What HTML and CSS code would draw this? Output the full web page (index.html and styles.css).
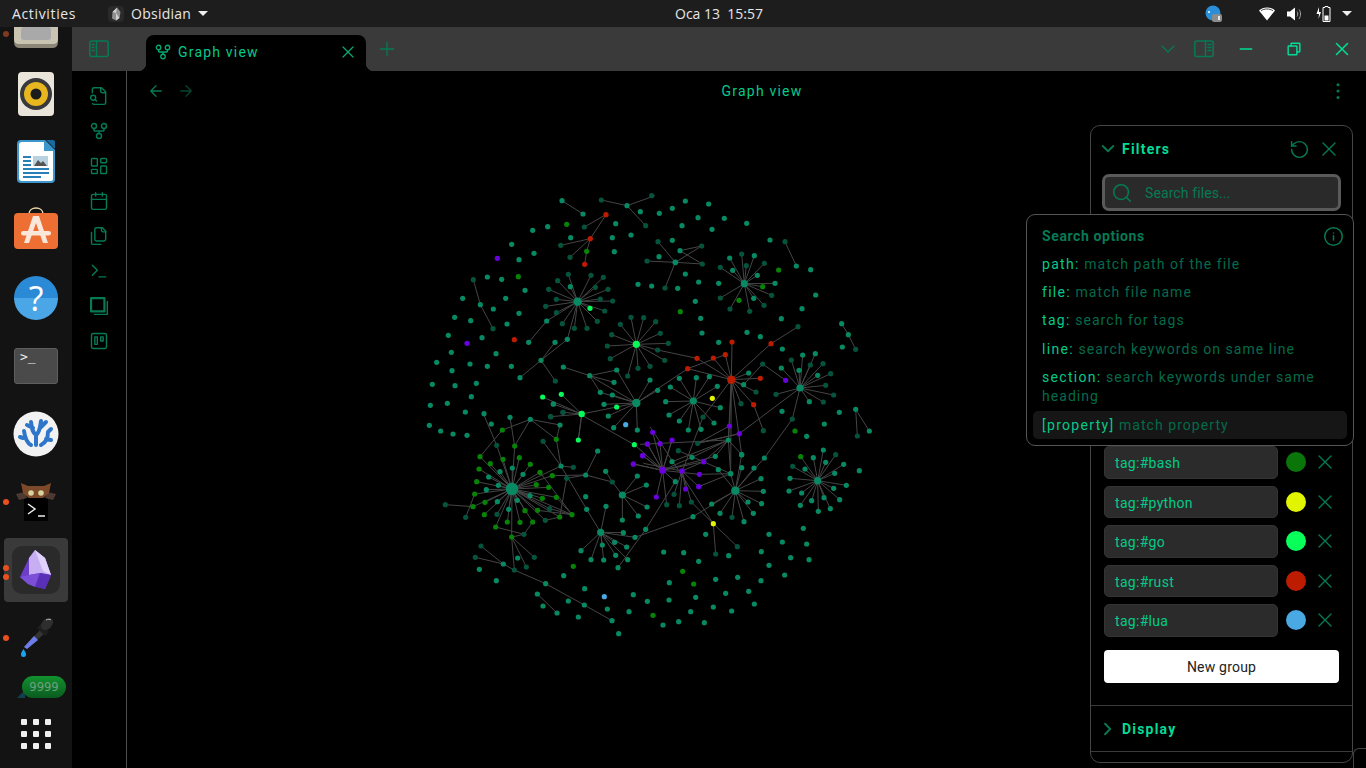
FILE: index.html
```html
<!DOCTYPE html>
<html lang="en">

<head>
    <meta charset="UTF-8">
    <meta name="viewport" content="width=device-width, initial-scale=1.0">
    <title>Graph view</title>
    <link rel="stylesheet" href="styles.css">
</head>

<body>
    <svg class="defs" width="0" height="0">
        <symbol id="i-x" viewBox="0 0 24 24"><path d="M18 6 6 18M6 6l12 12" /></symbol>
    </svg>

    <div class="topbar">
        <div class="top-left">
            <span class="activities">Activities</span>
            <span class="app-menu">
                <svg class="app-logo" width="16" height="16" viewBox="0 0 16 16">
                    <rect width="16" height="16" rx="4" fill="#2a2a2a" />
                    <path d="M9 1.500 12.500 6 11.500 12 8 14.500 4 12.500 4.500 6Z" fill="#8f8f8f" />
                    <path d="M9 1.500 8 7 4.500 6ZM8 7l3.500 5L8 14.500Z" fill="#d0d0d0" />
                </svg>
                <span class="app-name">Obsidian</span>
                <i class="caret"></i>
            </span>
        </div>
        <span class="clock">Oca 13&nbsp;&nbsp;15:57</span>
        <div class="tray">
            <svg class="tray-vpn" width="18" height="18" viewBox="0 0 18 18">
                <circle cx="8" cy="8" r="7.500" fill="#2a8fd8" />
                <circle cx="4" cy="7" r="1" fill="#fff" />
                <rect x="7" y="9" width="10" height="8" rx="2" fill="#8c8c8c" />
                <rect x="13" y="11" width="2" height="4" fill="#e6e6e6" />
            </svg>
            <svg class="tray-wifi" width="16" height="14" viewBox="0 0 16 14">
                <path d="M0 3.500C4-.5 12-.5 16 3.500L8 13.500Z" fill="#fff" />
                <path d="M2 3.700C5.500 1.400 10.500 1.400 14 3.700" fill="none" stroke="#1d1d1d" stroke-width=".8" />
            </svg>
            <svg class="tray-vol" width="16" height="14" viewBox="0 0 16 14">
                <path d="M0 4.500h3L8 .500v13l-5-4H0Z" fill="#fff" />
                <path d="M10 4.500c1 1.500 1 3.500 0 5M12 2.500c2 2.500 2 6.500 0 9.500" fill="none" stroke="#aaa" />
            </svg>
            <svg class="tray-bat" width="16" height="16" viewBox="0 0 16 16">
                <path d="M3 1 .500 8H3L2.500 13 5 6H3Z" fill="#fff" />
                <path d="M9 .500h3v1h2v14H7v-14h2Z" fill="none" stroke="#fff" />
                <rect x="8.500" y="9.500" width="4" height="5" fill="#fff" />
            </svg>
            <i class="caret"></i>
        </div>
    </div>

    <div class="desktop">
        <nav class="dock">
            <div class="dock-apps">
                <div class="dock-item dock-first">
                    <i class="run-dot run-dim"></i>
                    <svg width="46" height="46" viewBox="0 0 46 46">
                        <path d="M1 0h44v39q0 6-6 6H7q-6 0-6-6Z" fill="#8c8676" />
                        <path d="M1 0h44v36q0 5-5 5H6q-5 0-5-5Z" fill="#c9c3b2" />
                        <rect x="8" y="24" width="30" height="13" rx="3" fill="#a9a9a9" />
                    </svg>
                </div>
                <div class="dock-item">
                    <svg width="44" height="46" viewBox="0 0 44 46">
                        <rect x="4" y="1" width="36" height="44" rx="4" fill="#e9e5da" />
                        <circle cx="22" cy="23" r="16" fill="#39393c" />
                        <circle cx="22" cy="23" r="12" fill="#e8b61e" />
                        <circle cx="22" cy="23" r="5.500" fill="#1b1b1b" />
                    </svg>
                </div>
                <div class="dock-item">
                    <svg width="44" height="46" viewBox="0 0 44 46">
                        <path d="M7 1h24l10 10v29a4 4 0 0 1-4 4H7a4 4 0 0 1-4-4V5a4 4 0 0 1 4-4Z" fill="#3d97cc" />
                        <path d="M8 3h22v9h9v28a2 2 0 0 1-2 2H8a3 3 0 0 1-3-3V6a3 3 0 0 1 3-3Z" fill="#fff" />
                        <path d="M32 1l9 9V3a2 2 0 0 0-2-2Z" fill="#1a6aa0" />
                        <path d="M9 17h8v2H9zM9 21h8v2H9zM9 25h8v2H9zM9 29h26v2H9zM9 33h26v2H9zM9 37h18v2H9z" fill="#2a7fb8" />
                        <rect x="19" y="17" width="15" height="10" fill="#b9d2e2" />
                        <path d="M20 27l4-6 3 3 2-2 4 5Z" fill="#555" />
                    </svg>
                </div>
                <div class="dock-item">
                    <svg width="46" height="46" viewBox="0 0 46 46">
                        <path d="M16 7C16-1 30-1 30 7" fill="none" stroke="#f0d9a8" stroke-width="1.500" />
                        <rect x="1" y="6" width="44" height="36" rx="4" fill="#ee6f33" />
                        <path d="M20 9h6l9 27h-5l-7-20-7 20h-5Z" fill="#fbe6da" />
                        <rect x="8" y="24" width="30" height="4.500" rx="2.200" fill="#fbe6da" />
                    </svg>
                </div>
                <div class="dock-item">
                    <span class="help-icon">?</span>
                </div>
                <div class="dock-item">
                    <span class="term-icon">&gt;_</span>
                </div>
                <div class="dock-item">
                    <svg width="46" height="46" viewBox="0 0 46 46">
                        <circle cx="23" cy="23" r="22.500" fill="#f2f2f2" />
                        <path d="M23 34V24c-4-3-4-7-5-13M23 24c4-3 4-8 5-14M18 34c-4-2-6-7-7-14M28 34c4-2 7-7 7-13M20 17l-6-3M27 17l6-6M35 21l3-3M10 27l-3-1M33 28l5 1" fill="none" stroke="#2f75c9" stroke-width="4" stroke-linecap="round" />
                    </svg>
                </div>
                <div class="dock-item">
                    <i class="run-dot"></i>
                    <svg width="44" height="46" viewBox="0 0 44 46">
                        <rect x="10" y="19" width="24" height="23" rx="1" fill="#000" />
                        <path d="M14 25l7 5-7 5M24 37h7" fill="none" stroke="#eee" stroke-width="1.500" />
                        <path d="M2 15l9-2 2 6-8 2ZM42 15l-9-2-2 6 8 2Z" fill="#4e3a32" />
                        <path d="M7 4l7 3h16l7-3-2 10-6 5H15l-6-5Z" fill="#7c4a28" />
                        <circle cx="17" cy="14" r="2.800" fill="#d8d4a0" />
                        <circle cx="27" cy="14" r="2.800" fill="#d8d4a0" />
                    </svg>
                </div>
                <div class="dock-item dock-active">
                    <i class="run-dot dot-a"></i>
                    <i class="run-dot dot-b"></i>
                    <span class="obsidian-tile">
                        <svg width="34" height="42" viewBox="0 0 34 42">
                            <path d="M16 1 26 9 32 26 26 40 9 35 1 28 10 9Z" fill="#6d3fc9" />
                            <path d="M16 1 26 9 32 26 21 24 10 26 10 9Z" fill="#c7aef2" />
                            <path d="M16 1 26 9 32 26 24 22Z" fill="#e0d2fa" />
                            <path d="M1 28 10 26 21 24 16 38 9 35Z" fill="#7c4fd8" />
                            <path d="M21 24 32 26 26 40 16 38Z" fill="#5a2fb8" />
                        </svg>
                    </span>
                </div>
                <div class="dock-item">
                    <i class="run-dot"></i>
                    <svg width="46" height="46" viewBox="0 0 46 46">
                        <path d="M11 32 27 15l4 4-17 15Z" fill="#333" />
                        <path d="M11 32 21 21l4 4-11 9Z" fill="#6c7ce8" />
                        <path d="M24 13l8 8 4-4-8-8Z" fill="#1e1e1e" />
                        <ellipse cx="34" cy="9" rx="5" ry="7" transform="rotate(45 34 9)" fill="#2e2e2e" />
                        <path d="M33 5c2-1 4-1 5 0" fill="none" stroke="#bbb" />
                        <path d="M10.500 34c2 3 2.500 4 2.500 5.500a2.500 2.500 0 0 1-5 0c0-1.500.5-2.500 2.500-5.500Z" fill="#18a4f0" />
                    </svg>
                </div>
                <div class="dock-item dock-badge">
                    <i class="badge-tail"></i>
                    <span class="badge">9999</span>
                </div>
            </div>
            <div class="dock-grid">
                <i></i><i></i><i></i><i></i><i></i><i></i><i></i><i></i><i></i>
            </div>
        </nav>

        <div class="window">
            <div class="titlebar">
                <div class="title-side">
                    <svg class="icon dim big" viewBox="0 0 20 18" fill="none">
                        <rect x=".800" y="1" width="18.400" height="15.500" rx="2" />
                        <path d="M7.500 1v15.500M3 4.500h2M3 7.500h2M3 10.500h2" />
                    </svg>
                </div>
                <div class="tab">
                    <svg class="icon" viewBox="0 0 24 24" fill="none">
                        <circle cx="12" cy="18" r="3" /><circle cx="6" cy="6" r="3" /><circle cx="18" cy="6" r="3" />
                        <path d="M18 9v2c0 .6-.4 1-1 1H7c-.6 0-1-.4-1-1V9M12 12v3" />
                    </svg>
                    <span class="tab-label">Graph view</span>
                    <svg class="icon x-icon"><use href="#i-x" /></svg>
                </div>
                <svg class="icon dim new-tab" viewBox="0 0 24 24" fill="none"><path d="M12 3v18M3 12h18" /></svg>
                <div class="title-right">
                    <span class="title-btn">
                        <svg class="icon dim" viewBox="0 0 24 24" fill="none"><path d="m4 8 8 8 8-8" /></svg>
                    </span>
                    <span class="title-btn">
                        <svg class="icon dim big" viewBox="0 0 20 18" fill="none">
                            <rect x=".800" y="1" width="18.400" height="15.500" rx="2" />
                            <path d="M11.500 1v15.500M14 4.500h3M14 7.500h3M14 10.500h3" />
                        </svg>
                    </span>
                    <span class="win-btn">
                        <svg class="icon bright" viewBox="0 0 24 24" fill="none"><path d="M4.500 12h15" stroke-width="2.200" /></svg>
                    </span>
                    <span class="win-btn">
                        <svg class="icon bright small" viewBox="0 0 24 24" fill="none">
                            <rect x="2" y="7" width="15" height="15" rx="1" />
                            <path d="M7 7V3a1 1 0 0 1 1-1h13a1 1 0 0 1 1 1v13a1 1 0 0 1-1 1h-4" />
                        </svg>
                    </span>
                    <span class="win-btn">
                        <svg class="icon bright win-x"><use href="#i-x" /></svg>
                    </span>
                </div>
            </div>

            <div class="workspace">
                <div class="ribbon">
                    <svg class="icon dim" viewBox="0 0 24 24" fill="none">
                        <path d="M14 2v4a2 2 0 0 0 2 2h4M4.300 21a2 2 0 0 0 1.700 1H18a2 2 0 0 0 2-2V7l-5-5H6a2 2 0 0 0-2 2v4" />
                        <circle cx="5" cy="14" r="3" /><path d="m9 18-1.800-1.800" />
                    </svg>
                    <svg class="icon dim" viewBox="0 0 24 24" fill="none">
                        <circle cx="12" cy="18" r="3" /><circle cx="6" cy="6" r="3" /><circle cx="18" cy="6" r="3" />
                        <path d="M18 9v2c0 .6-.4 1-1 1H7c-.6 0-1-.4-1-1V9M12 12v3" />
                    </svg>
                    <svg class="icon dim" viewBox="0 0 24 24" fill="none">
                        <rect x="3" y="3" width="7" height="9" rx="1" /><rect x="14" y="3" width="7" height="5" rx="1" />
                        <rect x="14" y="12" width="7" height="9" rx="1" /><rect x="3" y="16" width="7" height="5" rx="1" />
                    </svg>
                    <svg class="icon dim" viewBox="0 0 24 24" fill="none">
                        <rect x="3" y="4" width="18" height="18" rx="2" />
                        <path d="M16 2v4M8 2v4M3 10h18" />
                    </svg>
                    <svg class="icon dim" viewBox="0 0 24 24" fill="none">
                        <path d="M20 7h-3a2 2 0 0 1-2-2V2" />
                        <path d="M9 18a2 2 0 0 1-2-2V4a2 2 0 0 1 2-2h7l4 4v10a2 2 0 0 1-2 2Z" />
                        <path d="M3 7.600v12.800A1.600 1.600 0 0 0 4.600 22h9.800" />
                    </svg>
                    <svg class="icon dim" viewBox="0 0 24 24" fill="none"><path d="m4 17 6-6-6-6M12 19h8" /></svg>
                    <svg class="icon dim" viewBox="0 0 24 24" fill="none">
                        <rect x="2.500" y="2.500" width="16" height="16" stroke-width="2.600" />
                        <path d="M22 6.500V22H6.500" />
                    </svg>
                    <svg class="icon dim" viewBox="0 0 24 24" fill="none">
                        <rect x="3" y="3" width="18" height="18" rx="2" />
                        <rect x="7" y="7" width="3" height="9" /><rect x="14" y="7" width="3" height="5" />
                    </svg>
                </div>

                <main class="view">
                    <header class="view-header">
                        <div class="view-nav">
                            <svg class="icon dim" viewBox="0 0 24 24" fill="none"><path d="m12 19-7-7 7-7M19 12H5" /></svg>
                            <svg class="icon faint" viewBox="0 0 24 24" fill="none"><path d="M5 12h14M12 5l7 7-7 7" /></svg>
                        </div>
                        <div class="view-title">Graph view</div>
                        <div class="view-actions">
                            <svg class="icon dots" viewBox="0 0 24 24">
                                <circle cx="12" cy="3.500" r="2" /><circle cx="12" cy="12" r="2" /><circle cx="12" cy="20.500" r="2" />
                            </svg>
                        </div>
                    </header>

                    <svg id="graph" class="graph" width="1239" height="697" viewBox="127 71 1239 697"></svg>

                    <aside class="filters">
                        <div class="filter-head">
                            <svg class="icon dim chevron" viewBox="0 0 24 24" fill="none"><path d="m5 8 7 7 7-7" /></svg>
                            <span class="section-name">Filters</span>
                            <svg class="icon dim reset" viewBox="0 0 24 24" fill="none">
                                <path d="M3 12a9 9 0 1 0 9-9 9.800 9.800 0 0 0-6.700 2.700L3 8" /><path d="M3 3v5h5" />
                            </svg>
                            <svg class="icon dim x-large head-x"><use href="#i-x" /></svg>
                        </div>
                        <div class="search-box">
                            <svg class="icon dim search-icon" viewBox="0 0 24 24" fill="none">
                                <circle cx="11" cy="11" r="8" /><path d="m21 21-4.300-4.300" />
                            </svg>
                            <span>Search files...</span>
                        </div>
                        <div class="groups">
                            <div class="group-row">
                                <span class="group-query">tag:#bash</span>
                                <i class="swatch sw-bash"></i>
                                <svg class="icon dim x-large"><use href="#i-x" /></svg>
                            </div>
                            <div class="group-row">
                                <span class="group-query">tag:#python</span>
                                <i class="swatch sw-python"></i>
                                <svg class="icon dim x-large"><use href="#i-x" /></svg>
                            </div>
                            <div class="group-row">
                                <span class="group-query">tag:#go</span>
                                <i class="swatch sw-go"></i>
                                <svg class="icon dim x-large"><use href="#i-x" /></svg>
                            </div>
                            <div class="group-row">
                                <span class="group-query">tag:#rust</span>
                                <i class="swatch sw-rust"></i>
                                <svg class="icon dim x-large"><use href="#i-x" /></svg>
                            </div>
                            <div class="group-row">
                                <span class="group-query">tag:#lua</span>
                                <i class="swatch sw-lua"></i>
                                <svg class="icon dim x-large"><use href="#i-x" /></svg>
                            </div>
                        </div>
                        <button class="new-group">New group</button>
                        <div class="filter-section">
                            <svg class="icon dim chevron" viewBox="0 0 24 24" fill="none"><path d="m8 5 7 7-7 7" /></svg>
                            <span class="section-name">Display</span>
                        </div>
                    </aside>

                    <div class="search-pop">
                        <div class="pop-title">
                            <span>Search options</span>
                            <svg class="icon dim info" viewBox="0 0 24 24" fill="none">
                                <circle cx="12" cy="12" r="10" /><path d="M12 16v-5M12 8h.010" />
                            </svg>
                        </div>
                        <div class="pop-item"><b>path:</b> match path of the file</div>
                        <div class="pop-item"><b>file:</b> match file name</div>
                        <div class="pop-item"><b>tag:</b> search for tags</div>
                        <div class="pop-item"><b>line:</b> search keywords on same line</div>
                        <div class="pop-item"><b>section:</b> search keywords under same heading</div>
                        <div class="pop-item pop-hover"><b>[property]</b> match property</div>
                    </div>

                    <i class="next-corner"></i>
                </main>
            </div>
        </div>
    </div>

    <script src="graph.js"></script>
</body>

</html>
```

FILE: styles.css
```css
* {
    box-sizing: border-box;
}

body {
    margin: 0;
    width: 1366px;
    height: 768px;
    overflow: hidden;
    background: #000;
    font-family: "Roboto", "Liberation Sans", sans-serif;
}

i {
    display: block;
}

.defs {
    position: absolute;
}

/* gnome top bar */
.topbar {
    display: flex;
    align-items: center;
    height: 27px;
    background: #1d1d1d;
    color: #e6e6e6;
    font-family: "Open Sans", sans-serif;
    font-size: 14px;
}

.top-left {
    display: flex;
    align-items: center;
    width: 675px;
    padding-left: 12px;
}

.activities {
    width: 96px;
    letter-spacing: .65px;
}

.app-menu {
    display: flex;
    align-items: center;
    gap: 7px;
}

.app-name {
    letter-spacing: .25px;
}

.tray {
    display: flex;
    align-items: center;
    margin-left: auto;
    padding-right: 14px;
}

.tray-vpn {
    margin-right: 36px;
}

.tray-wifi {
    margin-right: 12px;
}

.tray-vol {
    margin-right: 13px;
}

.tray-bat {
    margin-right: 10px;
}

.caret {
    width: 0;
    height: 0;
    border-left: 5px solid transparent;
    border-right: 5px solid transparent;
    border-top: 5px solid #eee;
}

.desktop {
    display: flex;
    height: 741px;
}

/* ubuntu dock */
.dock {
    display: flex;
    flex-direction: column;
    width: 72px;
    background: #131313;
}

.dock-apps {
    height: 673px;
    overflow: hidden;
}

.dock-item {
    position: relative;
    display: flex;
    align-items: center;
    justify-content: center;
    height: 68px;
}

.dock-first {
    margin-top: -35px;
}

.run-dot {
    position: absolute;
    left: 3px;
    top: 31px;
    width: 6px;
    height: 6px;
    border-radius: 50%;
    background: #e9501f;
}

.run-dim {
    top: 39px;
    background: #7d3a20;
}

.dock-active::before {
    content: "";
    position: absolute;
    left: 4px;
    top: 2px;
    width: 64px;
    height: 64px;
    border-radius: 4px;
    background: #3a3a3a;
}

.dot-a {
    top: 29px;
}

.dot-b {
    top: 38px;
}

.obsidian-tile {
    position: relative;
    display: flex;
    align-items: center;
    justify-content: center;
    width: 48px;
    height: 48px;
    border-radius: 10px;
    background: #2a2a2a;
}

.help-icon {
    display: flex;
    align-items: center;
    justify-content: center;
    width: 44px;
    height: 44px;
    border-radius: 50%;
    background: linear-gradient(#2b8ad6 50%, #4aa6e6 50%);
    color: #fff;
    font-family: "Open Sans", sans-serif;
    font-size: 34px;
}

.term-icon {
    width: 44px;
    height: 36px;
    padding: 0 0 0 5px;
    border: 1px solid #5e5e5e;
    border-radius: 3px;
    background: #4a4a4a;
    color: #eee;
    font-family: "DejaVu Sans Mono", monospace;
    font-size: 13px;
    line-height: 16px;
}

.badge {
    position: absolute;
    left: 22px;
    top: 4px;
    width: 44px;
    height: 22px;
    border-radius: 11px;
    background: linear-gradient(#12922e, #0a5c20);
    color: #6f9f80;
    font-family: "DejaVu Sans", sans-serif;
    font-size: 11.500px;
    line-height: 22px;
    text-align: center;
}

.badge-tail {
    position: absolute;
    left: 17px;
    top: 18px;
    width: 0;
    height: 0;
    border-left: 8px solid transparent;
    border-bottom: 8px solid #12404c;
}

.dock-grid {
    display: grid;
    grid-template-columns: repeat(3, 6px);
    grid-auto-rows: 6px;
    gap: 6px;
    justify-content: center;
    align-content: center;
    flex: 1;
}

.dock-grid i {
    border-radius: 1px;
    background: #f0f0f0;
}

/* obsidian window */
.window {
    display: flex;
    flex: 1;
    flex-direction: column;
    min-width: 0;
}

.icon {
    width: 18px;
    height: 18px;
    flex: none;
    stroke: #06b57d;
    stroke-width: 1.700;
    stroke-linecap: round;
    stroke-linejoin: round;
    fill: none;
}

.icon.dim {
    stroke: #067a55;
}

.icon.faint {
    stroke: #04442f;
}

.icon.bright {
    stroke: #02dc96;
}

.icon.big {
    width: 20px;
    height: 18px;
    stroke-width: 1.500;
}

.icon.small {
    width: 14px;
    height: 14px;
    stroke-width: 2.500;
}

.icon.dots {
    fill: #067a55;
    stroke: none;
}

.icon.x-large {
    width: 24px;
    height: 24px;
    stroke-width: 1.400;
}

.icon.win-x {
    width: 22px;
    height: 22px;
}

.titlebar {
    display: flex;
    align-items: flex-end;
    height: 44px;
    background: #3a3a3a;
}

.title-side {
    display: flex;
    align-items: center;
    justify-content: center;
    align-self: stretch;
    width: 54px;
}

.tab {
    position: relative;
    display: flex;
    align-items: center;
    gap: 6px;
    width: 220px;
    height: 36px;
    margin-left: 20px;
    padding: 0 8px 3px;
    border-radius: 8px 8px 0 0;
    background: #000;
}

.tab::before,
.tab::after {
    content: "";
    position: absolute;
    bottom: 0;
    width: 8px;
    height: 8px;
}

.tab::before {
    left: -8px;
    background: radial-gradient(circle at 0 0, #3a3a3a 8px, #000 8.500px);
}

.tab::after {
    right: -8px;
    background: radial-gradient(circle at 100% 0, #3a3a3a 8px, #000 8.500px);
}

.tab .icon {
    stroke: #06a872;
}

.tab .x-icon {
    width: 20px;
    height: 20px;
    margin-left: auto;
    stroke-width: 1.500;
}

.tab-label {
    color: #05c98a;
    font-size: 14px;
    letter-spacing: 1.200px;
}

.new-tab {
    align-self: center;
    margin-left: 12px;
}

.title-right {
    display: flex;
    align-items: center;
    align-self: stretch;
    margin-left: auto;
}

.title-btn {
    display: flex;
    align-items: center;
    justify-content: center;
    width: 36px;
}

.win-btn {
    display: flex;
    align-items: center;
    justify-content: center;
    width: 48px;
}

.workspace {
    display: flex;
    flex: 1;
    min-height: 0;
}

.ribbon {
    display: flex;
    flex-direction: column;
    align-items: center;
    gap: 15px;
    width: 55px;
    padding-top: 15px;
    border-right: 1px solid #4d4d4d;
    background: #000;
}

.ribbon .icon {
    width: 20px;
    height: 20px;
}

.view {
    position: relative;
    flex: 1;
    background: #000;
}

.view-header {
    display: flex;
    align-items: center;
    height: 40px;
    padding: 0 16px;
}

.view-nav {
    display: flex;
    gap: 12px;
    width: 58px;
    padding-left: 4px;
}

.view-title {
    flex: 1;
    color: #05c98a;
    font-size: 14px;
    letter-spacing: 1.200px;
    text-align: center;
}

.view-actions {
    display: flex;
    justify-content: flex-end;
    width: 24px;
    margin-right: 3px;
}

.graph {
    position: absolute;
    left: 0;
    top: 0;
}

.filters {
    position: absolute;
    left: 963px;
    top: 54px;
    width: 263px;
    height: 638px;
    padding: 0 13px;
    border: 1px solid #454545;
    border-radius: 10px;
    background: #000;
}

.filter-head {
    display: flex;
    align-items: center;
    height: 46px;
}

.chevron {
    margin-left: -5px;
    margin-right: 5px;
    stroke-width: 2.400;
}

.section-name {
    color: #02dc96;
    font-size: 14px;
    font-weight: 700;
    letter-spacing: 1.200px;
}

.reset {
    width: 21px;
    height: 21px;
    margin-left: auto;
    margin-right: 7px;
}

.head-x {
    margin-right: -2px;
}

.search-box {
    display: flex;
    align-items: center;
    gap: 12px;
    width: 239px;
    height: 37px;
    margin: 2px 0 0 -2px;
    padding: 0 6px;
    border: 3px solid #5a5a5a;
    border-radius: 7px;
    background: #2a2a2a;
    color: #067a55;
    font-size: 14px;
    letter-spacing: .1px;
}

.search-icon {
    width: 22px;
    height: 22px;
}

.groups {
    display: flex;
    flex-direction: column;
    gap: 7px;
    margin-top: 235px;
}

.group-row {
    display: flex;
    align-items: center;
}

.group-query {
    width: 174px;
    height: 32.500px;
    padding: 0 10px;
    border: 1px solid #333;
    border-radius: 5px;
    background: #2b2b2b;
    color: #05c98a;
    font-size: 14px;
    letter-spacing: .3px;
    line-height: 33px;
}

.swatch {
    width: 20px;
    height: 20px;
    margin: 0 7px 0 8px;
    border-radius: 50%;
}

.sw-bash { background: #0a760a; }
.sw-python { background: #e2f500; }
.sw-go { background: #08ff5a; }
.sw-rust { background: #bd1c00; }
.sw-lua { background: #4aa9e3; }

.new-group {
    display: block;
    width: 235px;
    height: 33px;
    margin-top: 13px;
    padding-top: 2px;
    border: 0;
    border-radius: 4px;
    background: #fff;
    color: #222;
    font-family: inherit;
    font-size: 14px;
    letter-spacing: .2px;
}

.filter-section {
    display: flex;
    align-items: center;
    height: 47px;
    margin: 22px -13px 0;
    padding: 2px 0 0 13px;
    border-top: 1px solid #3a3a3a;
    border-bottom: 1px solid #3a3a3a;
}

.search-pop {
    position: absolute;
    left: 899px;
    top: 143px;
    width: 328px;
    height: 232px;
    padding: 7px 6px;
    border: 1px solid #555;
    border-radius: 9px;
    background: #000;
    color: #046a4a;
    font-size: 14px;
    letter-spacing: 1.050px;
    line-height: 19px;
}

.pop-title {
    display: flex;
    align-items: center;
    justify-content: space-between;
    height: 28px;
    padding: 0 3px 0 9px;
    color: #067a55;
    font-weight: 700;
    letter-spacing: .6px;
}

.info {
    width: 21px;
    height: 21px;
}

.pop-item {
    padding: 4.700px 9px;
}

.pop-item b {
    color: #05c98a;
    font-weight: 400;
    letter-spacing: 1.300px;
}

.pop-hover {
    border-radius: 5px;
    background: #161616;
}

.next-corner {
    position: absolute;
    left: 1226px;
    top: 677px;
    width: 13px;
    height: 20px;
    border-top: 1px solid #444;
    border-left: 1px solid #444;
    border-top-left-radius: 6px;
}
```

FILE: graph.js
```js
// colors of the tag groups
var colors = {
    t: "#078a63", d: "#05533d", g: "#078407", l: "#08f95a",
    r: "#bd1c00", p: "#6a00de", y: "#e3f500", b: "#4aa9e3"
};

var svg = document.getElementById("graph");
var lineLayer = add("g", { stroke: "#454545", "stroke-width": 1 }, svg);
var nodeLayer = add("g", {}, svg);

function add(tag, attrs, parent) {
    var el = document.createElementNS("http://www.w3.org/2000/svg", tag);
    for (var k in attrs) {
        el.setAttribute(k, attrs[k]);
    }
    parent.appendChild(el);
    return el;
}

// coordinates are stored 3x, counted from the top left of each block
function block(ox, oy, data) {
    function px(v) { return ox + v / 3; }
    function py(v) { return oy + v / 3; }

    function line(x1, y1, x2, y2) {
        add("line", { x1: px(x1), y1: py(y1), x2: px(x2), y2: py(y2) }, lineLayer);
    }
    function dot(x, y, c, r) {
        add("circle", { cx: px(x), cy: py(y), r: r || 2.6, fill: colors[c] }, nodeLayer);
    }

    var links = data.links || [];
    for (var i = 0; i < links.length; i += 4) {
        line(links[i], links[i + 1], links[i + 2], links[i + 3]);
    }

    (data.stars || []).forEach(function (star) {
        for (var c in star.leaves) {
            var pts = star.leaves[c];
            for (var j = 0; j < pts.length; j += 2) {
                line(star.hub[0], star.hub[1], pts[j], pts[j + 1]);
                dot(pts[j], pts[j + 1], c);
            }
        }
    });
    (data.stars || []).forEach(function (star) {
        dot(star.hub[0], star.hub[1], star.hub[2], star.hub[3]);
    });

    for (var c in data.free) {
        var list = data.free[c];
        for (var n = 0; n < list.length; n += 2) {
            dot(list[n], list[n + 1], c);
        }
    }
}

// top left
block(420, 190, {
    free: {
        t: [426,32, 489,72, 621,47, 661,65, 587,101, 633,135, 577,143, 583,185, 654,283, 452,143, 383,110, 338,121, 275,163, 342,190, 297,209, 202,261, 245,268, 315,301, 128,325, 257,325, 220,357, 297,370, 104,382, 152,392, 261,402, 85,436, 186,443, 94,487, 228,491, 50,517, 150,522, 202,529, 96,542, 274,529, 37,583, 105,587, 169,580, 154,620, 31,646, 82,640, 136,666, 192,671, 181,344, 326,457, 405,457, 363,511, 300,563, 430,531, 509,557, 590,540, 582,577, 400,642],
        d: [544,30, 677,107, 493,111, 422,166, 450,202, 681,213, 160,269, 219,416, 406,573, 429,667, 392,680],
        g: [440,103, 295,260, 500,184],
        r: [558,74, 511,146, 494,223, 283,449],
        p: [232,205, 141,460]
    },
    links: [426,32,489,72, 544,30,621,47, 621,47,677,107, 621,47,705,17, 558,74,493,111, 558,74,511,146, 511,146,422,166, 511,146,450,202, 511,146,500,184, 500,184,494,223, 160,269,181,344, 181,344,219,416, 380,393,326,457, 442,448,363,511, 405,457,363,511, 363,511,300,563, 363,511,406,573, 430,531,509,557, 509,557,590,540, 509,557,582,577, 509,557,541,607, 509,557,649,639, 590,540,649,639, 590,651,485,672],
    stars: [
        { hub: [473,335,"t",4.2], leaves: {
            d: [445,253, 513,256, 550,262, 413,272, 526,292, 386,298, 564,298, 409,328, 541,327, 578,333, 377,349, 554,363, 409,368, 532,394, 427,401, 463,415, 501,415],
            t: [451,290, 380,393, 442,448],
            l: [510,355]
        } },
        { hub: [649,463,"l",3.6], leaves: {
            d: [633,382, 671,383, 601,403, 575,434, 562,468, 571,506, 623,558, 654,535, 707,395, 721,430, 745,460, 713,480, 734,511, 690,529]
        } },
        { hub: [649,639,"t",4.2], leaves: {
            t: [577,615, 552,643, 565,678, 690,570, 541,607, 713,601, 581,713, 652,720],
            l: [590,651]
        } },
        { hub: [485,672,"l",3.2], leaves: {
            l: [368,621, 424,613, 475,750],
            t: [400,642],
            d: [429,667, 392,680]
        } }
    ]
});

// top right
block(650, 190, {
    free: {
        t: [106,33, 176,42, 67,55, 28,70, 144,83, 223,85, 96,107, 186,118, 290,100, 360,150, 439,228, 482,239, 497,315, 456,356, 394,386, 152,385, 156,429, 136,334, 146,276, 206,280, 106,252, 27,200, 5,288, 83,295, 67,151, 90,182, 291,427, 331,440, 206,457, 397,477, 575,401, 595,434, 577,471, 568,667, 617,658, 396,664],
        d: [5,17, 405,155, 338,522, 617,478, 444,410, 622,738, 340,722],
        g: [91,365, 386,240, 267,331],
        p: [407,571],
        y: [187,625],
        r: [363,461]
    },
    links: [-9,213,76,217, 90,182,155,168, 90,182,157,222, 405,155,439,228, 575,401,595,434, 595,434,617,478, 617,658,622,738, 617,658,658,723, 23,480,141,505, 363,461,444,410, 363,461,244,569, 113,536,226,494, 338,522,281,584, 338,522,407,571, 113,536,-41,639, 311,644,340,722, 450,594,268,731, 268,731,143,760],
    stars: [
        { hub: [76,217,"t",2.9], leaves: { d: [24,155, 155,168, 157,222, 45,294] } },
        { hub: [283,281,"t",3.6], leaves: {
            t: [239,204, 313,197, 248,241, 322,256, 375,280, 311,325],
            d: [275,192, 343,220, 289,227, 211,232, 365,316, 342,346, 299,364, 240,357, 211,324],
            g: [338,290]
        } },
        { hub: [244,569,"r",4.2], leaves: {
            r: [246,456, 226,494, 190,504, 141,505, 113,536, 331,565, 311,644],
            t: [281,584, 296,549, 235,750, 275,794, 242,851],
            d: [318,606, 273,641, 159,681],
            p: [238,708]
        } },
        { hub: [450,594,"t",3.6], leaves: {
            d: [424,510, 481,525, 519,521, 542,551, 527,586, 551,615, 378,613, 520,636, 427,687],
            t: [458,495, 496,491, 447,541, 503,556, 394,534, 478,635]
        } },
        { hub: [130,633,"t",3.6], leaves: {
            t: [88,565, 139,563, 178,560, 202,589, 61,591, 47,635, 57,675, 211,653, 88,693, 115,720, 153,718, 192,699]
        } }
    ]
});

// bottom left
block(420, 415, {
    free: {
        t: [28,31, 62,48, 99,57, 141,61, 214,27, 270,7, 331,13, 420,30, 423,153, 533,108, 497,180, 557,169, 497,245, 500,283, 293,429, 250,447, 377,506, 493,570, 576,617, 178,463, 229,497, 431,482, 494,521, 352,537, 411,594, 369,573, 445,558, 562,582, 475,606, 640,539, 627,590, 682,559, 596,656, 594,458, 677,343],
        d: [76,269, 137,307, 230,91, 369,79, 460,157, 440,190, 312,358, 183,393, 166,427, 283,465, 319,456, 343,427],
        g: [284,93, 247,45, 409,73, 460,454],
        b: [617,29, 553,545],
        p: [682,87, 668,122, 640,147],
        l: [643,89]
    },
    links: [76,269,159,275, 137,307,164,237, 284,93,276,222, 284,93,270,7, 284,93,331,13, 247,45,180,125, 247,45,331,13, 192,0,230,91, 230,91,276,222, 331,13,420,30, 331,13,409,73, 420,30,409,73, 409,73,423,153, 423,153,460,157, 423,153,276,222, 369,79,423,153, 423,153,500,283, 440,190,419,306, 497,180,397,182, 497,180,533,108, 497,180,577,201, 557,169,577,201, 497,180,440,190, 360,172,456,299, 500,283,542,352, 275,366,312,358, 227,336,312,358, 338,321,312,358, 275,366,283,465, 275,366,319,456, 275,366,343,427, 183,393,250,447, 166,427,250,447, 250,447,283,465, 283,465,377,506, 377,506,493,570, 493,570,576,617, 352,537,411,594, 594,458,677,343, 677,343,766,200, 485,0,643,89, 485,0,475,75, 643,89,730,166, 419,306,376,316, 409,247,456,299, 353,286,456,299, 389,281,456,299],
    stars: [
        { hub: [276,222,"t",6.2], leaves: {
            g: [180,125, 249,133, 298,128, 331,148, 211,146, 360,172, 177,162, 397,182, 170,200, 349,209, 386,217, 164,237, 367,250, 409,247, 195,262, 159,275, 315,287, 353,286, 193,299, 456,299, 419,306, 262,321, 300,322, 338,321, 227,336, 275,366],
            t: [240,170, 277,159, 309,178, 206,186, 235,211, 199,224, 330,242, 232,260, 292,256, 266,283],
            d: [231,298, 389,281, 376,316]
        } },
        { hub: [607,240,"t",3.6], leaves: {
            t: [652,183, 679,210, 681,276, 655,303, 607,315],
            d: [577,201]
        } },
        { hub: [542,352,"t",3.6], leaves: {
            t: [558,274, 483,407, 513,434, 547,390, 551,435, 584,382, 587,421, 620,396, 623,434, 610,353, 645,367]
        } }
    ]
});

// bottom right
block(650, 415, {
    free: {
        t: [470,64, 523,27, 658,48, 628,167, 167,358, 41,411, 101,413, 146,439, 236,422, 334,410, 357,358, 397,381, 460,340, 470,387, 422,428, 477,434, 357,451, 404,480, 333,497, 197,493, 263,487, 58,503, 227,535, 296,529, 137,547, 57,555, 313,567, 190,576, 122,590, 245,588, 86,620, 39,630, 163,623, 196,124, 126,127, 66,140],
        d: [143,85, 85,107, 197,417, 262,395],
        g: [435,48, 98,469, 131,507, 9,601],
        y: [190,326],
        p: [268,56]
    },
    links: [-30,88,235,75, 85,107,242,176, 143,85,238,33, 143,85,268,56, 161,140,235,75, 126,127,235,75, 196,124,235,75, 66,140,235,75, 148,178,242,176, 146,215,242,176, 38,166,196,124, 38,166,126,127, 0,35,190,326, 124,261,190,326, 159,6,97,168, 238,33,235,75, 235,75,275,119, 235,75,242,176, 190,326,197,417, 190,326,262,395, 343,129,427,12, -45,367,129,305, -8,87,38,166, -22,122,38,166, -50,147,38,166, -20,145,96,168, 66,75,38,166],
    stars: [
        { hub: [38,166,"p",3.6], leaves: {
            p: [8,52, 30,86, 66,75, 19,246, 161,140, 148,178, -8,87, -22,122, -50,147],
            t: [76,200],
            d: [50,269]
        } },
        { hub: [96,168,"p",2.8], leaves: {
            p: [107,222, 146,215, 161,140],
            d: [72,238, 88,272, 124,261]
        } },
        { hub: [256,227,"t",4.2], leaves: {
            t: [275,119, 275,158, 205,164, 242,176, 312,159, 343,129, 333,191, 340,229, 335,266, 294,261, 310,295, 282,320, 210,295, 185,267, 129,305],
            d: [246,307]
        } },
        { hub: [503,197,"t",3.6], leaves: {
            g: [452,125],
            d: [428,154, 557,119],
            t: [490,128, 520,105, 527,142, 581,148, 465,162, 554,175, 420,190, 417,228, 455,234, 589,211, 551,220, 569,254, 522,248, 485,257, 451,271, 541,281, 505,289]
        } }
    ]
});
```
